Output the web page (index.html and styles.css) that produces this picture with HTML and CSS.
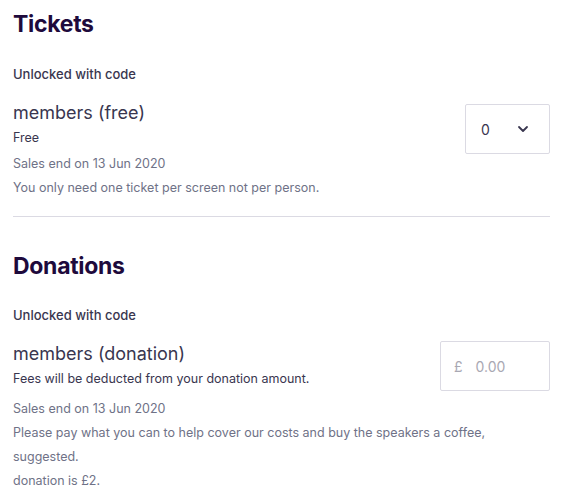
FILE: index.html
```html
<!DOCTYPE html>
<html>
<head>
<meta charset="utf-8">
<link rel="stylesheet" href="styles.css">
</head>
<body>
<main class="page">
  <section class="section">
    <h2 class="title">Tickets</h2>
    <p class="unlock">Unlocked with code</p>
    <div class="row">
      <div class="info">
        <div class="name">members (free)</div>
        <div class="price">Free</div>
        <div class="muted sales">Sales end on 13 Jun 2020</div>
        <div class="muted">You only need one ticket per screen not per person.</div>
      </div>
      <div class="select">
        <span class="select-val">0</span>
        <svg class="chev" width="12" height="8" viewBox="0 0 12 8"><path d="M2 2 L6 6 L10 2" fill="none" stroke="#39364f" stroke-width="1.8" stroke-linecap="round" stroke-linejoin="round"/></svg>
      </div>
    </div>
  </section>
  <hr class="divider">
  <section class="section donations">
    <h2 class="title">Donations</h2>
    <p class="unlock">Unlocked with code</p>
    <div class="row">
      <div class="info">
        <div class="name">members (donation)</div>
        <div class="price">Fees will be deducted from your donation amount.</div>
        <div class="muted sales2">Sales end on 13 Jun 2020</div>
        <div class="muted">Please pay what you can to help cover our costs and buy the speakers a coffee,</div>
        <div class="muted">suggested.</div>
        <div class="muted">donation is £2.</div>
      </div>
      <div class="amount">
        <span class="cur">£</span>
        <span class="amt">0.00</span>
      </div>
    </div>
  </section>
</main>
</body>
</html>
```
FILE: styles.css
```css
* { box-sizing: border-box; }
html, body { margin: 0; padding: 0; background: #fff; }
body { font-family: Inter, "Noto Sans", "Liberation Sans", sans-serif; }
.page { padding: 9px 18px 0 13px; }
.title {
  margin: 0;
  font-size: 23px;
  line-height: 30px;
  font-weight: 700;
  color: #1e0a3c;
  letter-spacing: -0.3px;
}
.unlock {
  margin: 25px 0 0;
  font-size: 13px;
  line-height: 20px;
  font-weight: 500;
  color: #39364f;
}
.row {
  display: flex;
  justify-content: space-between;
  align-items: flex-start;
  margin-top: 16px;
}
.info { flex: 1 1 auto; min-width: 0; }
.name {
  font-size: 18px;
  line-height: 26px;
  color: #39364f;
}
.price {
  font-size: 12.5px;
  line-height: 24px;
  color: #39364f;
}
.muted {
  font-size: 12.5px;
  line-height: 24px;
  color: #6f7287;
  white-space: nowrap;
}
.sales { margin-top: 2px; }
.sales2 { margin-top: 6px; }
.select {
  flex: 0 0 85px;
  height: 50px;
  margin-top: 4px;
  border: 1px solid #dbdae3;
  border-radius: 2px;
  display: flex;
  align-items: center;
  justify-content: space-between;
  padding: 0 20px 0 15px;
}
.select-val { font-size: 14px; color: #39364f; }
.chev { display: block; }
.divider {
  margin: 16px 0 0;
  border: 0;
  border-top: 1px solid #dbdae3;
}
.donations { padding-top: 34px; }
.donations .unlock { margin-top: 24px; }
.amount {
  flex: 0 0 110px;
  height: 50px;
  border: 1px solid #dbdae3;
  border-radius: 2px;
  display: flex;
  align-items: center;
  gap: 13px;
  padding: 0 13px;
  color: #a9a8b3;
  font-size: 14px;
}
```
